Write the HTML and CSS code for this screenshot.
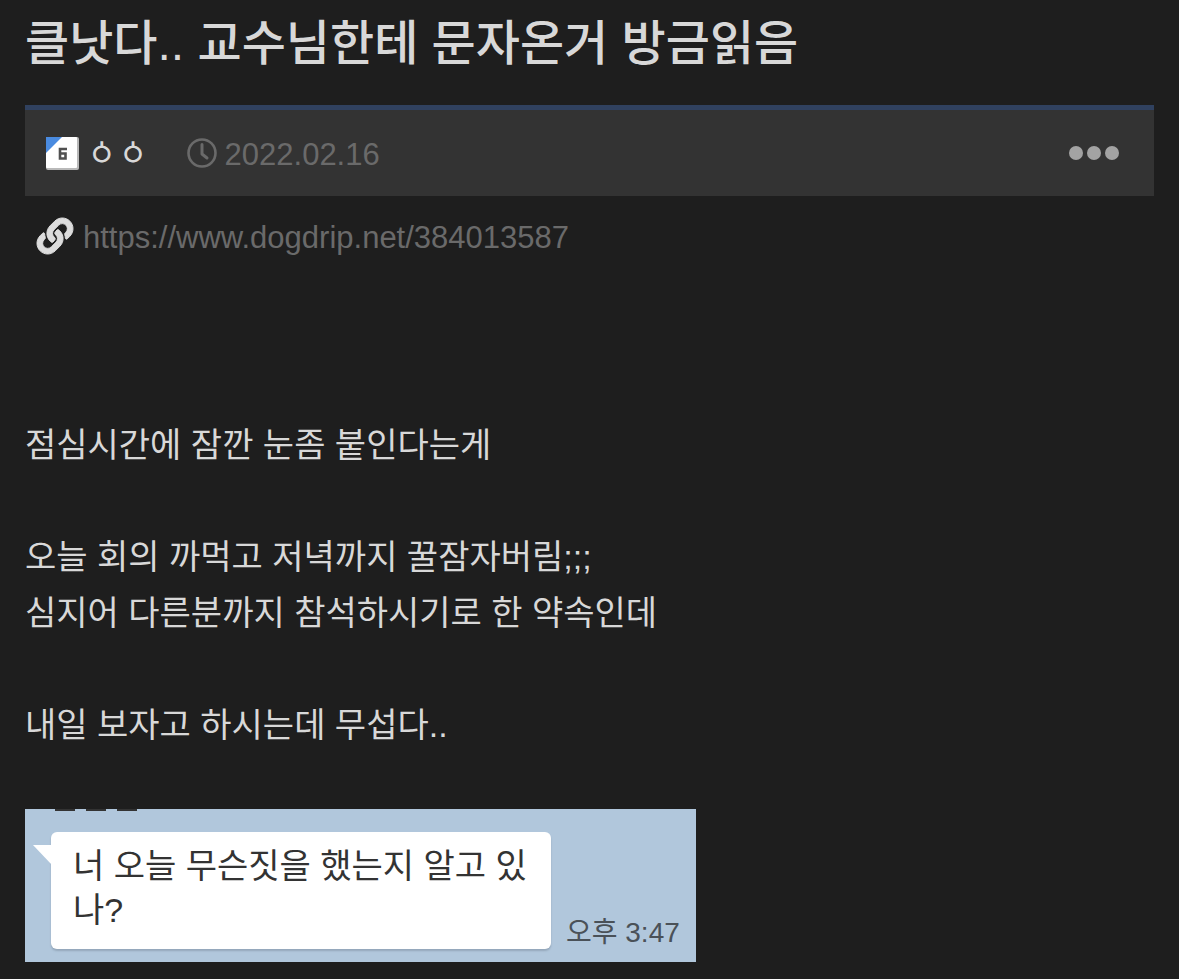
FILE: index.html
```html
<!DOCTYPE html>
<html lang="ko">
<head>
    <meta charset="UTF-8">
    <meta name="viewport" content="width=device-width, initial-scale=1.0">
    <title>클낫다.. 교수님한테 문자온거 방금읽음</title>
    <link rel="stylesheet" href="styles.css">
</head>
<body>
    <article class="post">
        <h1>클낫다.. 교수님한테 문자온거 방금읽음</h1>
        <div class="post-info">
            <svg class="level" viewBox="0 0 33 33" role="img" aria-label="레벨 6">
                <rect x="0" y="0" width="33" height="33" rx="2" fill="#b9b9b9"/>
                <rect x="0" y="0" width="31" height="31" rx="1" fill="#fff"/>
                <path d="M0 0H16L0 16Z" fill="#4a8be0"/>
                <path d="M21 12H14V21.500H19.500V16.500H14" fill="none" stroke="#505050" stroke-width="2.6"/>
            </svg>
            <span class="author">ㆁㆁ</span>
            <svg class="clock" viewBox="0 0 30 30" fill="none" stroke="#6a6a6a">
                <circle cx="15" cy="15" r="13.5" stroke-width="2.6"/>
                <path d="M15 6.500V16L20 20" stroke-width="3" stroke-linecap="round" stroke-linejoin="round"/>
            </svg>
            <time datetime="2022-02-16">2022.02.16</time>
            <button type="button" class="more" aria-label="더보기">
                <svg viewBox="0 0 50 14" fill="#a3a3a3">
                    <circle cx="7" cy="7" r="7"/>
                    <circle cx="25" cy="7" r="7"/>
                    <circle cx="43" cy="7" r="7"/>
                </svg>
            </button>
        </div>
        <div class="post-link">
            <svg viewBox="0 0 512 512" fill="#dcdcdc" stroke="#dcdcdc" stroke-width="14">
                <path d="M326.612 185.391c59.747 59.809 58.927 155.698.36 214.590-.11.120-.240.250-.360.370l-67.200 67.200c-59.270 59.270-155.699 59.262-214.960 0-59.270-59.260-59.270-155.700 0-214.960l37.106-37.106c9.840-9.840 26.786-3.300 27.294 10.606.648 17.722 3.826 35.527 9.690 52.721 1.986 5.822.567 12.262-3.783 16.612l-13.087 13.087c-28.026 28.026-28.905 73.660-1.155 101.960 28.024 28.579 74.086 28.749 102.325.510l67.200-67.190c28.191-28.191 28.073-73.757 0-101.830-3.701-3.694-7.429-6.564-10.341-8.569a16.037 16.037 0 0 1-6.947-12.606c-.396-10.567 3.348-21.456 11.698-29.806l21.054-21.055c5.521-5.521 14.182-6.199 20.584-1.731a152.482 152.482 0 0 1 20.522 17.197zM467.547 44.449c-59.261-59.262-155.690-59.270-214.960 0l-67.200 67.200c-.120.120-.250.250-.360.370-58.566 58.892-59.387 154.781.360 214.590a152.454 152.454 0 0 0 20.521 17.196c6.402 4.468 15.064 3.789 20.584-1.731l21.054-21.055c8.350-8.350 12.094-19.239 11.698-29.806a16.037 16.037 0 0 0-6.947-12.606c-2.912-2.005-6.640-4.875-10.341-8.569-28.073-28.073-28.191-73.639 0-101.830l67.200-67.190c28.239-28.239 74.300-28.069 102.325.510 27.750 28.300 26.872 73.934-1.155 101.960l-13.087 13.087c-4.350 4.350-5.769 10.790-3.783 16.612 5.864 17.194 9.042 34.999 9.690 52.721.509 13.906 17.454 20.446 27.294 10.606l37.106-37.106c59.271-59.259 59.271-155.699.001-214.959z"/>
            </svg>
            <a href="https://www.dogdrip.net/384013587">https://www.dogdrip.net/384013587</a>
        </div>
        <div class="post-body">
            <p>점심시간에 잠깐 눈좀 붙인다는게</p>
            <p>오늘 회의 까먹고 저녁까지 꿀잠자버림;;;<br>심지어 다른분까지 참석하시기로 한 약속인데</p>
            <p>내일 보자고 하시는데 무섭다..</p>
        </div>
        <div class="chat">
            <div class="sender"><i></i><i></i><i></i></div>
            <div class="message">
                <div class="bubble">너 오늘 무슨짓을 했는지 알고 있나?</div>
                <span class="sent-at">오후 3:47</span>
            </div>
        </div>
    </article>
</body>
</html>
```
FILE: styles.css
```css
body {
    margin: 0;
    background-color: #1e1e1e;
    color: #d8d8d8;
    font-family: "Liberation Sans", "Noto Sans CJK KR", sans-serif;
}
.post {
    padding: 8px 25px 17px;
}
h1 {
    margin: 0 0 25px;
    font-size: 48px;
    font-weight: 500;
    line-height: 72px;
}
.post-info {
    display: flex;
    align-items: center;
    height: 86px;
    padding: 0 35px 0 21px;
    border-top: 5px solid #30415f;
    background-color: #333;
}
.level {
    width: 33px;
    height: 33px;
}
.author {
    margin-left: 7px;
    font-size: 34px;
    line-height: 40px;
}
.clock {
    width: 30px;
    height: 30px;
    margin: 0 8px 0 38px;
}
time {
    padding-top: 4px;
    color: #6a6a6a;
    font-size: 31px;
}
.more {
    margin-left: auto;
    padding: 0;
    border: 0;
    background: none;
    cursor: pointer;
}
.more svg {
    display: block;
    width: 50px;
    height: 14px;
}
.post-link {
    display: flex;
    align-items: center;
    gap: 10px;
    margin-bottom: 159px;
    padding: 18px 12px 0;
}
.post-link svg {
    width: 36px;
    height: 36px;
    overflow: visible;
}
.post-link a {
    padding-top: 4px;
    color: #6a6a6a;
    font-size: 31px;
    line-height: 40px;
    text-decoration: none;
}
.post-body {
    font-size: 34px;
    line-height: 56px;
}
.post-body p {
    margin: 0 0 56px;
}
.chat {
    box-sizing: border-box;
    width: fit-content;
    max-width: 100%;
    padding: 0 16px 13px 26px;
    background-color: #b1c7dc;
    color: #333;
}
/* bottom edge of the cut off sender name */
.sender {
    display: flex;
    gap: 11px;
    height: 23px;
    padding-left: 4px;
}
.sender i {
    width: 20px;
    height: 2px;
    background-color: #333;
}
.message {
    display: flex;
    align-items: flex-end;
    gap: 15px;
}
.bubble {
    position: relative;
    box-sizing: border-box;
    width: 500px;
    min-height: 117px;
    padding: 12px 22px;
    border-radius: 6px;
    background-color: #fff;
    box-shadow: 0 2px 2px #94a7ba;
    font-size: 34px;
    line-height: 44px;
    word-break: break-all;
}
.bubble::before {
    content: "";
    position: absolute;
    top: 13px;
    left: -18px;
    border-top: 20px solid #fff;
    border-left: 19px solid transparent;
}
.sent-at {
    color: #4a5158;
    font-size: 28px;
    line-height: 32px;
    white-space: nowrap;
}
```
